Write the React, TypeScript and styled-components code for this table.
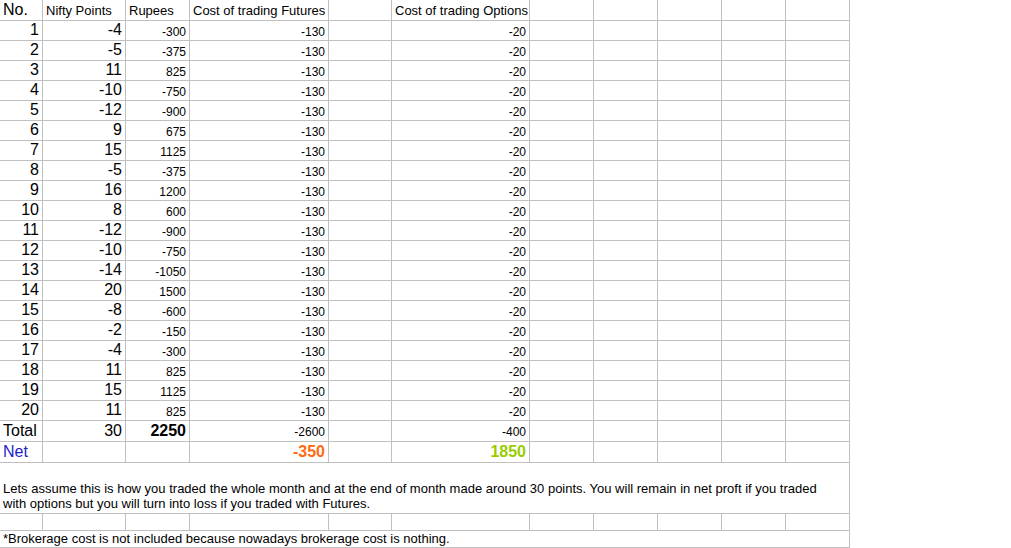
import { styled, createGlobalStyle } from 'styled-components';

const GlobalStyle = createGlobalStyle`
  html, body {
    margin: 0;
    padding: 0;
    background: #ffffff;
  }
  body {
    font-family: 'Liberation Sans', Arial, sans-serif;
    color: #000000;
  }
`;

const columns = '43px 83px 64px 139px 63px 138px 64px 64px 64px 64px 64px';
const gridLine = '#c0c0c0';

const Sheet = styled.div`
  display: flex;
  flex-flow: column nowrap;
  width: 850px;
`;

interface RowProps {
  $h: number;
}

const Row = styled.div<RowProps>`
  display: grid;
  grid-template-columns: ${columns};
  height: ${({ $h }) => $h}px;
`;

interface CellProps {
  $align?: 'left' | 'right';
  $size?: number;
  $bold?: boolean;
  $color?: string;
  $span?: number;
}

const Cell = styled.div<CellProps>`
  box-sizing: border-box;
  display: flex;
  align-items: flex-end;
  justify-content: ${({ $align = 'right' }) =>
    $align === 'left' ? 'flex-start' : 'flex-end'};
  grid-column: ${({ $span }) => ($span ? `span ${$span}` : 'auto')};
  padding: 0 3px 1px;
  border-right: 1px solid ${gridLine};
  border-bottom: 1px solid ${gridLine};
  font-size: ${({ $size = 12 }) => $size}px;
  font-weight: ${({ $bold }) => ($bold ? 700 : 400)};
  color: ${({ $color = '#000000' }) => $color};
  line-height: 1.15;
  white-space: nowrap;
`;

const NoteCell = styled(Cell)`
  display: block;
  padding: 18px 3px 0;
  font-size: 13px;
  line-height: 15px;
  white-space: normal;
`;

const FootCell = styled(Cell)`
  padding-bottom: 0;
  font-size: 13px;
`;

const trades: [number, number][] = [
  [-4, -300],
  [-5, -375],
  [11, 825],
  [-10, -750],
  [-12, -900],
  [9, 675],
  [15, 1125],
  [-5, -375],
  [16, 1200],
  [8, 600],
  [-12, -900],
  [-10, -750],
  [-14, -1050],
  [20, 1500],
  [-8, -600],
  [-2, -150],
  [-4, -300],
  [11, 825],
  [15, 1125],
  [11, 825],
];

const blanks = (n: number) =>
  Array.from({ length: n }, (_, i) => <Cell key={`b${i}`} />);

export default function App(): React.ReactNode {
  return (
    <>
      <GlobalStyle />
      <Sheet>
        <Row $h={21}>
          <Cell $align="left" $size={16}>
            No.
          </Cell>
          <Cell $align="left" $size={13}>
            Nifty Points
          </Cell>
          <Cell $align="left" $size={13}>
            Rupees
          </Cell>
          <Cell $align="left" $size={13}>
            Cost of trading Futures
          </Cell>
          <Cell />
          <Cell $align="left" $size={13}>
            Cost of trading Options
          </Cell>
          {blanks(5)}
        </Row>

        {trades.map(([points, rupees], i) => (
          <Row $h={20} key={i}>
            <Cell $size={16}>{i + 1}</Cell>
            <Cell $size={16}>{points}</Cell>
            <Cell>{rupees}</Cell>
            <Cell>-130</Cell>
            <Cell />
            <Cell>-20</Cell>
            {blanks(5)}
          </Row>
        ))}

        <Row $h={21}>
          <Cell $align="left" $size={16}>
            Total
          </Cell>
          <Cell $size={16}>30</Cell>
          <Cell $size={16} $bold>
            2250
          </Cell>
          <Cell>-2600</Cell>
          <Cell />
          <Cell>-400</Cell>
          {blanks(5)}
        </Row>

        <Row $h={21}>
          <Cell $align="left" $size={16} $color="#1e22c8">
            Net
          </Cell>
          <Cell />
          <Cell />
          <Cell $size={16} $bold $color="#ff6a10">
            -350
          </Cell>
          <Cell />
          <Cell $size={16} $bold $color="#99cc00">
            1850
          </Cell>
          {blanks(5)}
        </Row>

        <Row $h={51}>
          <NoteCell $align="left" $span={11}>
            Lets assume this is how you traded the whole month and at the end of
            month made around 30 points. You will remain in net proft if you
            traded
            <br />
            with options but you will turn into loss if you traded with Futures.
          </NoteCell>
        </Row>

        <Row $h={17}>{blanks(11)}</Row>

        <Row $h={17}>
          <FootCell $align="left" $span={11}>
            *Brokerage cost is not included because nowadays brokerage cost is
            nothing.
          </FootCell>
        </Row>
      </Sheet>
    </>
  );
}
